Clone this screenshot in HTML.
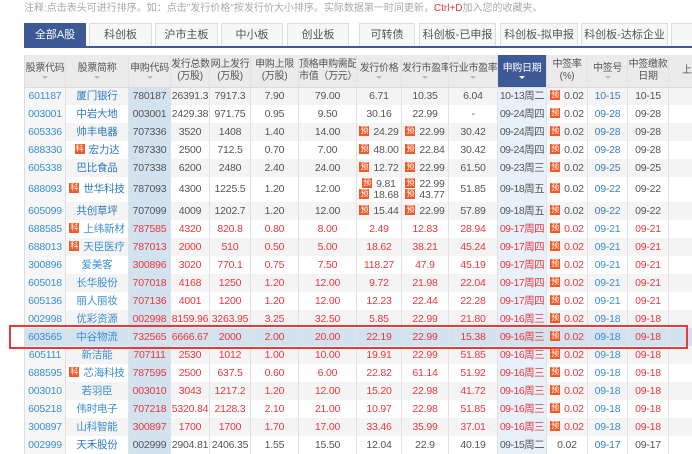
<!DOCTYPE html>
<html><head><meta charset="utf-8"><style>
*{margin:0;padding:0;box-sizing:border-box}
body{width:692px;height:443px;overflow:hidden;background:#fff;font-family:"Liberation Sans","Noto Sans CJK SC",sans-serif;font-size:11px;color:#555;position:relative}
.note{position:absolute;left:24px;top:-1px;font-size:10px;color:#aaa;white-space:nowrap}
.note b{color:#e8383d;font-weight:normal}
.tabs{position:absolute;left:24px;top:23px;height:25px;width:680px;border-bottom:2px solid #3d5a96}
.tab{position:absolute;top:0;height:23px;border:1px solid #ddd;border-bottom:none;background:#f7f7f7;color:#555;font-size:11px;text-align:center;line-height:22px}
.tab.on{background:#3d5a96;color:#fff;border-color:#3d5a96}
table{position:absolute;left:24px;top:55px;border-collapse:collapse;table-layout:fixed;width:700px;border-left:1px solid #ddd}
td,th{text-align:center;white-space:nowrap;overflow:hidden;border-right:1px solid #e2e2e2;font-weight:normal;padding:0}
th{height:32px;background:#ebebeb;font-size:10px;color:#555;line-height:12px;position:relative;border-bottom:1px solid #ddd;letter-spacing:-0.3px}
th i{display:block;width:0;height:0;margin:1px auto 0;border-left:3px solid transparent;border-right:3px solid transparent;border-top:3px solid #bbb}
th.act{background:#3d5a96;color:#fff}
th.act i{border-top-color:#fff}
td{height:18px;font-size:10.5px;line-height:11px;letter-spacing:-0.2px}
tr:nth-child(even) td{background:#f4f4f4}
td.c1{color:#3a8fd0;background:#f6f6f6!important}
td.c2{color:#2e7ac0}
td.c3{background:#d3e2ef!important}
td.dt{background:#e8f1fa!important;letter-spacing:-0.5px}
td.bl{color:#3a7fbf}
tr.r td{color:#e8383d}
tr.r td.c1,tr.r td.c2,tr.r td.bl{color:#3a8fd0}
tr.hl td{background:#d3e2ef!important}
.y{display:inline-block;width:10px;height:10px;background:#f05a28;color:#fff;font-size:8px;line-height:10px;text-align:center;margin-right:4px;vertical-align:middle;letter-spacing:0;overflow:hidden;position:relative;top:-1px}
.box{position:absolute;left:9px;top:325px;width:679px;height:24px;border:2px solid #e83a3a}
</style></head><body>
<div class="note">注释:点击表头可进行排序。如：点击"发行价格"按发行价大小排序。实际数据第一时间更新，<b>Ctrl+D</b>加入您的收藏夹。</div>
<div class="tabs">
<div class="tab on" style="left:0;width:62px">全部A股</div>
<div class="tab" style="left:65px;width:63px">科创板</div>
<div class="tab" style="left:131px;width:63px">沪市主板</div>
<div class="tab" style="left:197px;width:62px">中小板</div>
<div class="tab" style="left:263px;width:62px">创业板</div>
<div class="tab" style="left:335px;width:56px">可转债</div>
<div class="tab" style="left:395px;width:77px">科创板-已申报</div>
<div class="tab" style="left:476px;width:78px">科创板-拟申报</div>
<div class="tab" style="left:557px;width:87px">科创板-达标企业</div>
<div class="tab" style="left:647px;width:60px">其</div>
</div>
<table>
<colgroup><col style="width:41px"><col style="width:63px"><col style="width:42px"><col style="width:39px"><col style="width:41px"><col style="width:48px"><col style="width:58px"><col style="width:45px"><col style="width:47px"><col style="width:49px"><col style="width:49px"><col style="width:41px"><col style="width:40px"><col style="width:41px"><col style="width:56px"></colgroup>
<tr><th>股票代码<i></i></th><th>股票简称<i></i></th><th>申购代码<i></i></th><th>发行总数<br>(万股)</th><th>网上发行<br>(万股)</th><th>申购上限<br>(万股)</th><th>顶格申购需配<br>市值（万元）</th><th>发行价格<i></i></th><th>发行市盈率<i></i></th><th>行业市盈率<i></i></th><th class="act">申购日期<i></i></th><th>中签率<br>(%)</th><th>中签号<i></i></th><th>中签缴款<br>日期</th><th>上市日</th></tr>
<tr><td class="c1">601187</td><td class="c2">厦门银行</td><td class="c3">780187</td><td>26391.3</td><td>7917.3</td><td>7.90</td><td>79.00</td><td>6.71</td><td>10.35</td><td>6.04</td><td class="dt">10-13周二</td><td><span class="y">预</span>0.02</td><td class="bl">10-15</td><td>10-15</td><td>-</td></tr>
<tr><td class="c1">003001</td><td class="c2">中岩大地</td><td class="c3">003001</td><td>2429.38</td><td>971.75</td><td>0.95</td><td>9.50</td><td>30.16</td><td>22.99</td><td>-</td><td class="dt">09-24周四</td><td><span class="y">预</span>0.02</td><td class="bl">09-28</td><td>09-28</td><td>-</td></tr>
<tr><td class="c1">605336</td><td class="c2">帅丰电器</td><td class="c3">707336</td><td>3520</td><td>1408</td><td>1.40</td><td>14.00</td><td><span class="y">预</span>24.29</td><td><span class="y">预</span>22.99</td><td>30.42</td><td class="dt">09-24周四</td><td><span class="y">预</span>0.02</td><td class="bl">09-28</td><td>09-28</td><td>-</td></tr>
<tr><td class="c1">688330</td><td class="c2"><span class="y">科</span>宏力达</td><td class="c3">787330</td><td>2500</td><td>712.5</td><td>0.70</td><td>7.00</td><td><span class="y">预</span>48.00</td><td><span class="y">预</span>22.84</td><td>30.42</td><td class="dt">09-24周四</td><td><span class="y">预</span>0.02</td><td class="bl">09-28</td><td>09-28</td><td>-</td></tr>
<tr><td class="c1">605338</td><td class="c2">巴比食品</td><td class="c3">707338</td><td>6200</td><td>2480</td><td>2.40</td><td>24.00</td><td><span class="y">预</span>12.72</td><td><span class="y">预</span>22.99</td><td>61.50</td><td class="dt">09-23周三</td><td><span class="y">预</span>0.02</td><td class="bl">09-25</td><td>09-25</td><td>-</td></tr>
<tr><td class="c1" style="height:25px">688093</td><td class="c2"><span class="y">科</span>世华科技</td><td class="c3">787093</td><td>4300</td><td>1225.5</td><td>1.20</td><td>12.00</td><td><span class="y">预</span>9.81<br><span class="y">预</span>18.68</td><td><span class="y">预</span>22.99<br><span class="y">预</span>43.77</td><td>51.85</td><td class="dt">09-18周五</td><td><span class="y">预</span>0.02</td><td class="bl">09-22</td><td>09-22</td><td>-</td></tr>
<tr><td class="c1">605099</td><td class="c2">共创草坪</td><td class="c3">707099</td><td>4009</td><td>1202.7</td><td>1.20</td><td>12.00</td><td><span class="y">预</span>15.44</td><td><span class="y">预</span>22.99</td><td>57.89</td><td class="dt">09-18周五</td><td><span class="y">预</span>0.02</td><td class="bl">09-22</td><td>09-22</td><td>-</td></tr>
<tr class="r"><td class="c1">688585</td><td class="c2"><span class="y">科</span>上纬新材</td><td class="c3">787585</td><td>4320</td><td>820.8</td><td>0.80</td><td>8.00</td><td>2.49</td><td>12.83</td><td>28.94</td><td class="dt">09-17周四</td><td><span class="y">预</span>0.02</td><td class="bl">09-21</td><td>09-21</td><td style="color:#555">-</td></tr>
<tr class="r"><td class="c1">688013</td><td class="c2"><span class="y">科</span>天臣医疗</td><td class="c3">787013</td><td>2000</td><td>510</td><td>0.50</td><td>5.00</td><td>18.62</td><td>38.21</td><td>45.24</td><td class="dt">09-17周四</td><td><span class="y">预</span>0.02</td><td class="bl">09-21</td><td>09-21</td><td style="color:#555">-</td></tr>
<tr class="r"><td class="c1">300896</td><td class="c2">爱美客</td><td class="c3">300896</td><td>3020</td><td>770.1</td><td>0.75</td><td>7.50</td><td>118.27</td><td>47.9</td><td>45.19</td><td class="dt">09-17周四</td><td><span class="y">预</span>0.02</td><td class="bl">09-21</td><td>09-21</td><td style="color:#555">-</td></tr>
<tr class="r"><td class="c1">605018</td><td class="c2">长华股份</td><td class="c3">707018</td><td>4168</td><td>1250</td><td>1.20</td><td>12.00</td><td>9.72</td><td>21.98</td><td>22.04</td><td class="dt">09-17周四</td><td><span class="y">预</span>0.02</td><td class="bl">09-21</td><td>09-21</td><td style="color:#555">-</td></tr>
<tr class="r"><td class="c1">605136</td><td class="c2">丽人丽妆</td><td class="c3">707136</td><td>4001</td><td>1200</td><td>1.20</td><td>12.00</td><td>12.23</td><td>22.44</td><td>22.28</td><td class="dt">09-17周四</td><td><span class="y">预</span>0.02</td><td class="bl">09-21</td><td>09-21</td><td style="color:#555">-</td></tr>
<tr class="r"><td class="c1">002998</td><td class="c2">优彩资源</td><td class="c3">002998</td><td>8159.96</td><td>3263.95</td><td>3.25</td><td>32.50</td><td>5.85</td><td>22.99</td><td>21.80</td><td class="dt">09-16周三</td><td><span class="y">预</span>0.02</td><td class="bl">09-18</td><td>09-18</td><td style="color:#555">-</td></tr>
<tr class="r hl"><td class="c1">603565</td><td class="c2">中谷物流</td><td class="c3">732565</td><td>6666.67</td><td>2000</td><td>2.00</td><td>20.00</td><td>22.19</td><td>22.99</td><td>15.38</td><td class="dt">09-16周三</td><td><span class="y">预</span>0.02</td><td class="bl">09-18</td><td>09-18</td><td style="color:#555">-</td></tr>
<tr class="r"><td class="c1">605111</td><td class="c2">新洁能</td><td class="c3">707111</td><td>2530</td><td>1012</td><td>1.00</td><td>10.00</td><td>19.91</td><td>22.99</td><td>51.85</td><td class="dt">09-16周三</td><td><span class="y">预</span>0.02</td><td class="bl">09-18</td><td>09-18</td><td style="color:#555">-</td></tr>
<tr class="r"><td class="c1">688595</td><td class="c2"><span class="y">科</span>芯海科技</td><td class="c3">787595</td><td>2500</td><td>637.5</td><td>0.60</td><td>6.00</td><td>22.82</td><td>61.14</td><td>51.92</td><td class="dt">09-16周三</td><td><span class="y">预</span>0.02</td><td class="bl">09-18</td><td>09-18</td><td style="color:#555">-</td></tr>
<tr class="r"><td class="c1">003010</td><td class="c2">若羽臣</td><td class="c3">003010</td><td>3043</td><td>1217.2</td><td>1.20</td><td>12.00</td><td>15.20</td><td>22.98</td><td>41.72</td><td class="dt">09-16周三</td><td><span class="y">预</span>0.02</td><td class="bl">09-18</td><td>09-18</td><td style="color:#555">-</td></tr>
<tr class="r"><td class="c1">605218</td><td class="c2">伟时电子</td><td class="c3">707218</td><td>5320.84</td><td>2128.3</td><td>2.10</td><td>21.00</td><td>10.97</td><td>22.98</td><td>51.85</td><td class="dt">09-16周三</td><td><span class="y">预</span>0.02</td><td class="bl">09-18</td><td>09-18</td><td style="color:#555">-</td></tr>
<tr class="r"><td class="c1">300897</td><td class="c2">山科智能</td><td class="c3">300897</td><td>1700</td><td>1700</td><td>1.70</td><td>17.00</td><td>33.46</td><td>35.99</td><td>37.01</td><td class="dt">09-16周三</td><td><span class="y">预</span>0.02</td><td class="bl">09-18</td><td>09-18</td><td style="color:#555">-</td></tr>
<tr><td class="c1">002999</td><td class="c2">天禾股份</td><td class="c3">002999</td><td>2904.81</td><td>2406.35</td><td>1.55</td><td>15.50</td><td>12.04</td><td>22.9</td><td>40.19</td><td class="dt">09-15周二</td><td>0.02</td><td class="bl">09-17</td><td>09-17</td><td>-</td></tr>
</table>
<div class="box"></div>
</body></html>
